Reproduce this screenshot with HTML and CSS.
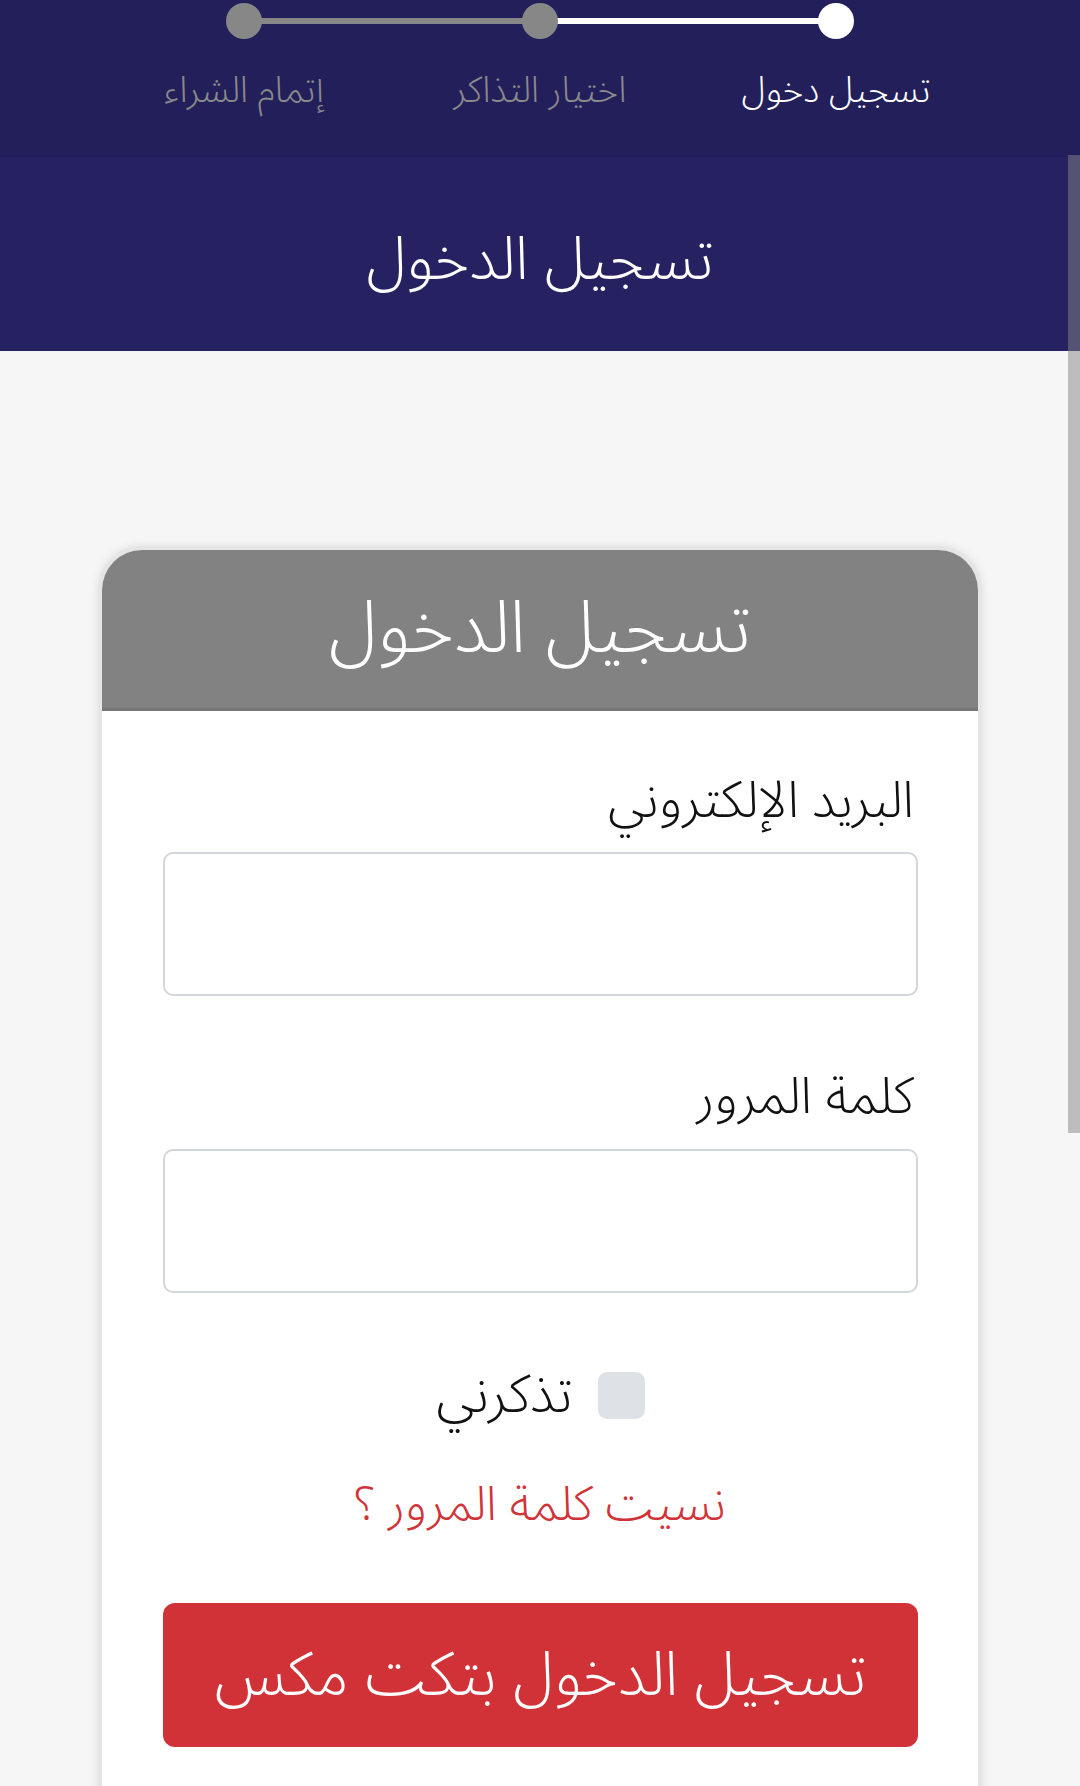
FILE: index.html
```html
<!DOCTYPE html>
<html lang="ar" dir="rtl">
<head>
<meta charset="utf-8">
<title>تسجيل الدخول</title>
<link rel="stylesheet" href="styles.css">
</head>
<body>
<div class="stepper">
  <div class="steps">
    <div class="step done active">
      <span class="dot"></span>
      <span class="step-label">تسجيل دخول</span>
    </div>
    <div class="step line-done">
      <span class="dot"></span>
      <span class="step-label">اختيار التذاكر</span>
    </div>
    <div class="step">
      <span class="dot"></span>
      <span class="step-label">إتمام الشراء</span>
    </div>
  </div>
</div>
<header class="page-header">
  <h1 class="page-title">تسجيل الدخول</h1>
</header>
<main class="content">
  <section class="card">
    <div class="card-head">
      <h2 class="card-title">تسجيل الدخول</h2>
    </div>
    <form class="card-body">
      <label class="field-label" for="email">البريد الإلكتروني</label>
      <input class="field-input" id="email" type="email">
      <label class="field-label second" for="password">كلمة المرور</label>
      <input class="field-input" id="password" type="password">
      <div class="remember">
        <span class="checkbox"></span>
        <span class="remember-text">تذكرني</span>
      </div>
      <a class="forgot" href="#">نسيت كلمة المرور ؟</a>
      <button class="submit" type="button">تسجيل الدخول بتكت مكس</button>
    </form>
  </section>
</main>
<div class="scroll-thumb"></div>
</body>
</html>
```
FILE: styles.css
```css
* { box-sizing: border-box; }
html, body { margin: 0; padding: 0; }
body {
  font-family: "Noto Sans Arabic", "Noto Kufi Arabic", "DejaVu Sans", sans-serif;
  font-weight: 300;
  background: #f6f6f6;
  width: 1080px;
  min-height: 1786px;
  overflow: hidden;
}
.stepper {
  background: #221f5a;
  height: 157px;
}
.steps {
  width: 888px;
  margin: 0 auto;
  display: grid;
  grid-template-columns: repeat(3, 1fr);
}
.step {
  position: relative;
  display: flex;
  flex-direction: column;
  align-items: center;
}
.step + .step::before {
  content: "";
  position: absolute;
  top: 18px;
  left: 50%;
  width: 100%;
  height: 6px;
  background: #878787;
}
.step.line-done::before { background: #ffffff; }
.dot {
  position: relative;
  z-index: 1;
  width: 36px;
  height: 36px;
  margin-top: 3px;
  border-radius: 50%;
  background: #878787;
}
.step.done .dot { background: #ffffff; }
.step-label {
  margin-top: 28px;
  font-size: 36px;
  line-height: 48px;
  color: #8a8a8a;
  white-space: nowrap;
}
.step.active .step-label { color: #ffffff; }
.page-header {
  background: #262262;
  height: 194px;
  padding-top: 12px;
  display: flex;
  align-items: center;
  justify-content: center;
}
.page-title {
  margin: 0;
  font-size: 60px;
  font-weight: 300;
  color: #ffffff;
  line-height: 1;
}
.content {
  padding-top: 195px;
}
.card {
  width: 884px;
  margin: 0 auto;
  background: #ffffff;
  border: 4px solid #e5e5e5;
  border-bottom: none;
  border-radius: 44px 44px 0 0;
  box-shadow: 0 0 10px rgba(0, 0, 0, 0.1);
  overflow: hidden;
}
.card-head {
  background: #828282;
  height: 161px;
  border-bottom: 3px solid #767676;
  display: flex;
  align-items: center;
  justify-content: center;
}
.card-title {
  margin: 0;
  font-size: 73px;
  font-weight: 300;
  color: #ffffff;
  line-height: 1;
}
.card-body {
  display: flex;
  flex-direction: column;
  padding: 60px 60px 60px 61px;
}
.field-label {
  font-size: 51px;
  line-height: 60px;
  color: #111111;
  padding-right: 4px;
  margin-bottom: 21px;
}
.field-label.second { margin-top: 71px; margin-bottom: 22px; }
.field-input {
  height: 144px;
  width: 100%;
  border: 2px solid #d3d6da;
  border-radius: 10px;
  background: #ffffff;
  font-family: inherit;
  font-size: 36px;
}
.remember {
  margin-top: 72px;
  display: flex;
  align-items: center;
  justify-content: center;
  gap: 25px;
}
.checkbox {
  width: 47px;
  height: 47px;
  border-radius: 9px;
  background: #dee2e6;
}
.remember-text {
  font-size: 53px;
  line-height: 60px;
  color: #111111;
}
.forgot {
  margin-top: 50px;
  align-self: center;
  font-size: 48px;
  line-height: 60px;
  color: #d03338;
  text-decoration: none;
}
.submit {
  margin-top: 68px;
  height: 144px;
  width: 100%;
  border: none;
  border-radius: 12px;
  background: #d13237;
  color: #ffffff;
  font-family: inherit;
  font-weight: 300;
  font-size: 61px;
}
.scroll-thumb {
  position: fixed;
  top: 155px;
  right: 0;
  width: 12px;
  height: 978px;
  background: rgba(131, 131, 131, 0.5);
}
```
